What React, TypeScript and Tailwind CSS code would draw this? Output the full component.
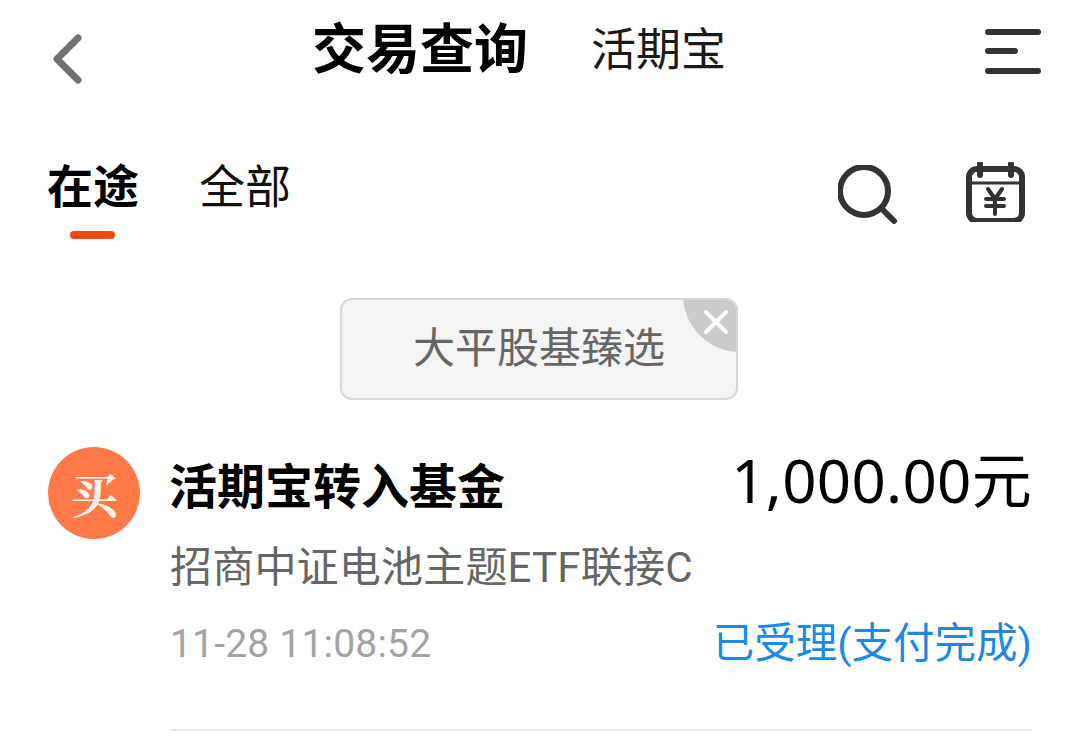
import React from "react";

const cjk = "font-['Roboto','Noto_Sans_CJK_SC',sans-serif]";

export default function App() {
  return (
    <div className={`w-[1080px] h-[752px] overflow-hidden bg-white ${cjk}`}>
      <header className="relative flex h-[104px] items-center justify-between pl-[48px] pr-[36px]">
        <svg width="40" height="56" viewBox="0 0 40 56" className="mt-[12px]">
          <path d="M30 8 L9 29 L30 50" fill="none" stroke="#717171" strokeWidth="7" strokeLinecap="round" strokeLinejoin="round" />
        </svg>
        <div className="absolute left-[312px] top-[20px] flex items-center">
          <span className="text-[54px] leading-[62px] font-bold text-black">交易查询</span>
          <span className="ml-[63px] text-[45px] leading-[62px] text-[#1a1a1a]">活期宝</span>
        </div>
        <svg width="60" height="48" viewBox="0 0 60 48">
          <path d="M4 4 H54 M4 23 H31 M4 43 H54" fill="none" stroke="#333" strokeWidth="6" strokeLinecap="round" />
        </svg>
      </header>

      <nav className="flex h-[144px] items-start justify-between pl-[47px] pr-[54px] pt-[52px]">
        <div className="flex gap-[60px]">
          <div className="flex flex-col items-center">
            <span className="text-[46px] leading-[62px] font-bold text-black">在途</span>
            <span className="mt-[13px] mr-[1px] h-[8px] w-[45px] rounded-full bg-[#f04a0c]" />
          </div>
          <span className="text-[46px] leading-[62px] text-[#111]">全部</span>
        </div>
        <div className="mt-[9px] flex items-start gap-[68px]">
          <svg width="60" height="60" viewBox="0 0 60 60">
            <circle cx="26" cy="26" r="24" fill="none" stroke="#333" strokeWidth="6" />
            <path d="M43 43 L56 56" stroke="#333" strokeWidth="6" strokeLinecap="round" />
          </svg>
          <svg width="60" height="60" viewBox="0 0 60 60" className="-mt-[3px]">
            <rect x="3" y="7" width="53" height="52" rx="8" fill="none" stroke="#333" strokeWidth="6" />
            <path d="M3 21 H56" stroke="#333" strokeWidth="3" />
            <path d="M14 2 V13 M45 2 V13" stroke="#333" strokeWidth="6" strokeLinecap="round" />
            <path d="M22 27 L29 37 L36 27 M20 37 H38 M20 44 H38 M29 37 V52" fill="none" stroke="#333" strokeWidth="4" strokeLinecap="round" strokeLinejoin="round" />
          </svg>
        </div>
      </nav>

      <div className="flex justify-center pr-[2px] pt-[50px]">
        <div className="relative flex h-[102px] w-[398px] items-center justify-center overflow-hidden rounded-[12px] border-2 border-[#d8d8d8] bg-[#f4f4f4]">
          <span className="text-[42px] leading-none text-[#666]">大平股基臻选</span>
          <div className="absolute -right-[61px] -top-[62px] h-[114px] w-[114px] rounded-full bg-[#cbcbcb]" />
          <svg width="26" height="26" viewBox="0 0 26 26" className="absolute right-[7px] top-[9px]">
            <path d="M3 3 L23 23 M23 3 L3 23" stroke="#fff" strokeWidth="4" strokeLinecap="round" />
          </svg>
        </div>
      </div>

      <section className="flex pl-[48px] pr-[48px] pt-[47px]">
        <div className="flex h-[92px] w-[92px] shrink-0 items-center justify-center rounded-full bg-[#fe7a48]">
          <span className="font-['Noto_Serif_CJK_SC','Noto_Sans_CJK_SC',sans-serif] text-[48px] leading-none font-bold text-[#fff5ea]">买</span>
        </div>
        <div className="ml-[30px] flex-1">
          <div className="flex items-start justify-between">
            <span className="-ml-[1px] mt-[5px] text-[48px] leading-[72px] font-bold text-black">活期宝转入基金</span>
            <span className="-mt-[3px] font-['Noto_Sans','Noto_Sans_CJK_SC',sans-serif] text-[60px] leading-[72px] tracking-[0.3px] text-black">1,000.00元</span>
          </div>
          <div className="mt-[18px] text-[42px] leading-[52px] tracking-[0.2px] text-[#666]">招商中证电池主题ETF联接C</div>
          <div className="mt-[25px] flex items-center justify-between">
            <span className="text-[39px] leading-[50px] tracking-[0.2px] text-[#a3a3a3]">11-28 11:08:52</span>
            <span className="text-[41.5px] leading-[50px] text-[#1a8ae6]">已受理(支付完成)</span>
          </div>
          <div className="mt-[60px] h-[2px] bg-[#ececec]" />
        </div>
      </section>
    </div>
  );
}
